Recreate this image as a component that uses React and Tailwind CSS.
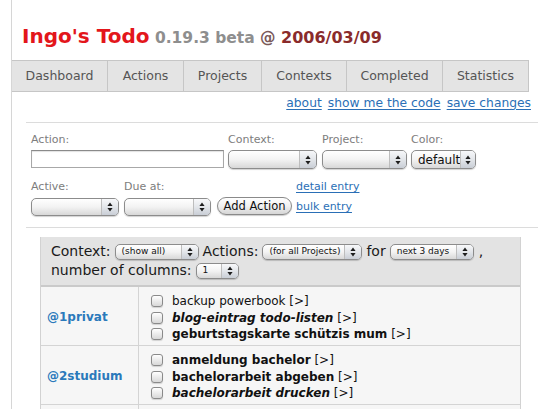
import React from 'react';

const Arrows = () => (
  <svg width="6" height="10" viewBox="0 0 6 10">
    <path d="M3 0.5L5.6 4H0.4Z M3 9.5L0.4 6H5.6Z" fill="#1e1e1e" />
  </svg>
);

const Select = ({ className = '', text = '', textClass = 'text-[12px]' }) => (
  <div className={`flex items-stretch rounded-[5px] border border-[#8c8c8c] bg-gradient-to-b from-white via-[#f3f3f3] to-[#d8d8d8] shadow-[0_1px_1px_rgba(0,0,0,0.18)] overflow-hidden ${className}`}>
    <div className={`flex-1 flex items-center pl-[6px] text-[#111] whitespace-nowrap ${textClass}`}>{text}</div>
    <div className="w-[17px] flex items-center justify-center border-l border-[#bdbdbd] bg-gradient-to-b from-[#f7f8fa] via-[#e3e6ea] to-[#c9ced6]">
      <Arrows />
    </div>
  </div>
);

const Check = () => (
  <span className="inline-block w-[12px] h-[12px] mr-[9px] rounded-[3px] border border-[#8a8a8a] bg-gradient-to-b from-white to-[#d8d8d8] shadow-[0_1px_1px_rgba(0,0,0,0.15)] align-[-2px]" />
);

const tabs = [
  ['Dashboard', 'w-[96px]'],
  ['Actions', 'w-[76px]'],
  ['Projects', 'w-[78px]'],
  ['Contexts', 'w-[85px]'],
  ['Completed', 'w-[96px]'],
  ['Statistics', 'w-[86px]'],
];

const groups = [
  {
    name: '@1privat',
    items: [
      { text: 'backup powerbook', style: '' },
      { text: 'blog-eintrag todo-listen', style: 'font-bold italic' },
      { text: 'geburtstagskarte schützis mum', style: 'font-bold' },
    ],
  },
  {
    name: '@2studium',
    items: [
      { text: 'anmeldung bachelor', style: 'font-bold' },
      { text: 'bachelorarbeit abgeben', style: 'font-bold' },
      { text: 'bachelorarbeit drucken', style: 'font-bold italic' },
    ],
  },
];

const Link = ({ children }) => (
  <a href="#" className="text-[#2a6fb6] underline underline-offset-[2px]">{children}</a>
);

const App = () => {
  return (
    <div className="min-h-screen bg-white font-['DejaVu_Sans',Verdana,sans-serif] text-[#222]">
      <div className="ml-[11px] min-h-screen border-l border-[#d6d6d6] overflow-hidden">
        <h1 className="h-[60px] pt-[24px] pl-[10px] leading-[24px] whitespace-nowrap">
          <span className="text-[20px] font-bold text-[#e3161b]">Ingo's Todo</span>
          <span className="text-[15.5px] font-bold text-[#8e8e8e]"> 0.19.3 beta </span>
          <span className="text-[15.5px] font-bold text-[#7a5a5a]">@ </span>
          <span className="text-[16px] font-bold text-[#8a2b2b]">2006/03/09</span>
        </h1>

        <div className="flex h-[32px] w-[517px] border-y border-[#c6c6c6] bg-[#e4e4e4]">
          {tabs.map(([t, w]) => (
            <div key={t} className={`${w} flex items-center justify-center border-r border-[#c6c6c6] text-[12.5px] text-[#555]`}>
              {t}
            </div>
          ))}
        </div>

        <div className="h-[30px] w-[519px] pt-[4px] flex justify-end gap-[6px] text-[12.3px] leading-[14px]">
          <Link>about</Link>
          <Link>show me the code</Link>
          <Link>save changes</Link>
        </div>

        <div className="ml-[14px] border-t border-[#dcdcdc]" />

        <div className="pl-[19px] pt-[10px] text-[11px] leading-[14px] text-[#7d7d7d]">
          <div className="flex items-start">
            <div className="w-[197px]">
              <div className="mb-[3px]">Action:</div>
              <div className="w-[193px] h-[18px] border border-[#a8a8a8] border-t-[#8a8a8a] shadow-[inset_0_1px_1px_rgba(0,0,0,0.12)] bg-white" />
            </div>
            <div className="w-[94px]">
              <div className="mb-[3px]">Context:</div>
              <Select className="w-[89px] h-[19px]" />
            </div>
            <div className="w-[89px]">
              <div className="mb-[3px]">Project:</div>
              <Select className="w-[85px] h-[19px]" />
            </div>
            <div>
              <div className="mb-[3px]">Color:</div>
              <Select className="w-[65px] h-[19px]" text="default" textClass="text-[12px]" />
            </div>
          </div>

          <div className="flex items-start mt-[11px]">
            <div className="w-[93px]">
              <div className="mb-[4px]">Active:</div>
              <Select className="w-[88px] h-[18px]" />
            </div>
            <div className="w-[93px]">
              <div className="mb-[4px]">Due at:</div>
              <Select className="w-[87px] h-[18px]" />
            </div>
            <div className="w-[79px] pt-[17px]">
              <button className="w-[75px] h-[18px] rounded-full border border-[#8a8a8a] bg-gradient-to-b from-white via-[#f1f1f1] to-[#d6d6d6] shadow-[0_1px_1px_rgba(0,0,0,0.2)] text-[11.5px] leading-[16px] text-[#111]">
                Add Action
              </button>
            </div>
            <div className="flex flex-col gap-[6px] text-[11px] leading-[14px]">
              <Link>detail entry</Link>
              <Link>bulk entry</Link>
            </div>
          </div>
        </div>

        <div className="ml-[14px] mt-[11px] border-t border-[#dcdcdc]" />

        <div className="ml-[28px] mt-[9px] w-[481px] border-x border-[#d2d2d2]">
          <div className="bg-[#e3e3e3] pl-[10px] pt-[5px] pb-[5px] border-b-2 border-[#cacaca] text-[14px] leading-[19px] text-[#1a1a1a]">
            <div className="flex items-center whitespace-nowrap">
              <span>Context:</span>
              <Select className="ml-[4px] w-[84px] h-[16px]" text="(show all)" textClass="text-[9px]" />
              <span className="ml-[4px]">Actions:</span>
              <Select className="ml-[4px] w-[100px] h-[16px]" text="(for all Projects)" textClass="text-[9px]" />
              <span className="ml-[4px]">for</span>
              <Select className="ml-[4px] w-[84px] h-[16px]" text="next 3 days" textClass="text-[9px]" />
              <span className="ml-[5px]">,</span>
            </div>
            <div className="flex items-center whitespace-nowrap">
              <span>number of columns:</span>
              <Select className="ml-[4px] w-[43px] h-[16px]" text="1" textClass="text-[9px]" />
            </div>
          </div>

          {groups.map((g) => (
            <div key={g.name} className="flex h-[59px] border-b border-[#d4d4d4] bg-[#f6f6f6]">
              <div className="w-[98px] flex items-center pl-[6px] pt-[2px] border-r border-[#d4d4d4] text-[12px] font-bold text-[#2a79bb]">
                {g.name}
              </div>
              <div className="flex-1 pl-[12px] pt-[6px] text-[12px] leading-[16.5px] text-[#111]">
                {g.items.map((it) => (
                  <div key={it.text} className="whitespace-nowrap">
                    <Check />
                    <span className={it.style}>{it.text}</span> [&gt;]
                  </div>
                ))}
              </div>
            </div>
          ))}
          <div className="flex h-[59px] bg-[#f6f6f6]">
            <div className="w-[98px] border-r border-[#d4d4d4]" />
          </div>
        </div>
      </div>
    </div>
  );
};

export default App;
